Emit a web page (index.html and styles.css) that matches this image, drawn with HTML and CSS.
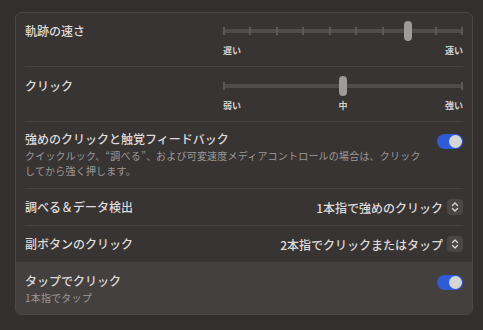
FILE: index.html
```html
<!DOCTYPE html>
<html lang="ja">
<head>
    <meta charset="utf-8">
    <title>トラックパッド</title>
    <link rel="stylesheet" href="styles.css">
</head>
<body>
    <div class="panel">
        <div class="row slider-row">
            <div class="title">軌跡の速さ</div>
            <div class="slider">
                <div class="track">
                    <span class="tick"></span><span class="tick"></span><span class="tick"></span><span class="tick"></span><span class="tick"></span>
                    <span class="tick"></span><span class="tick"></span><span class="tick"></span><span class="tick"></span><span class="tick"></span>
                    <span class="knob" style="left: 77.1%"></span>
                </div>
                <div class="marks">
                    <span>遅い</span>
                    <span>速い</span>
                </div>
            </div>
        </div>

        <div class="row slider-row second">
            <div class="title">クリック</div>
            <div class="slider">
                <div class="track">
                    <span class="tick"></span><span class="tick"></span>
                    <span class="knob" style="left: 50%"></span>
                </div>
                <div class="marks">
                    <span>弱い</span>
                    <span>中</span>
                    <span>強い</span>
                </div>
            </div>
        </div>

        <div class="row toggle-row force">
            <div>
                <div class="title">強めのクリックと触覚フィードバック</div>
                <p class="desc">クイックルック、“調べる”、および可変速度メディアコントロールの場合は、クリック<br>してから強く押します。</p>
            </div>
            <span class="toggle on"></span>
        </div>

        <div class="row popup-row">
            <div class="title">調べる＆データ検出</div>
            <div class="popup">
                <span>1本指で強めのクリック</span>
                <span class="stepper">
                    <svg width="16" height="16" viewBox="0 0 16 16"><path d="M5.5 6.5 8 4l2.5 2.5M5.5 9.5 8 12l2.5-2.5" fill="none" stroke="#d9d6d5" stroke-width="1.4" stroke-linecap="round" stroke-linejoin="round"/></svg>
                </span>
            </div>
        </div>

        <div class="row popup-row last">
            <div class="title">副ボタンのクリック</div>
            <div class="popup">
                <span>2本指でクリックまたはタップ</span>
                <span class="stepper">
                    <svg width="16" height="16" viewBox="0 0 16 16"><path d="M5.5 6.5 8 4l2.5 2.5M5.5 9.5 8 12l2.5-2.5" fill="none" stroke="#d9d6d5" stroke-width="1.4" stroke-linecap="round" stroke-linejoin="round"/></svg>
                </span>
            </div>
        </div>

        <div class="row toggle-row tap">
            <div>
                <div class="title">タップでクリック</div>
                <p class="desc">1本指でタップ</p>
            </div>
            <span class="toggle on"></span>
        </div>
    </div>
</body>
</html>
```

FILE: styles.css
```css
body {
    margin: 0;
    background-color: #332f2e;
    font-family: "Noto Sans CJK JP", "Noto Sans", sans-serif;
    color: #dfdbda;
}
.panel {
    margin: 12px 10px 0 15px;
    border: 1px solid #4b4746;
    border-radius: 6px;
    background-color: #383433;
    overflow: hidden;
}
.row {
    margin: 0 9px;
    border-bottom: 1px solid #474342;
    display: flex;
    justify-content: space-between;
}
.row.last {
    border-bottom: none;
}
.title {
    font-size: 12px;
    font-weight: 500;
    line-height: 16px;
}
.desc {
    margin: 1px 0 0;
    font-size: 10px;
    line-height: 15px;
    letter-spacing: 0.2px;
    color: #9c9897;
}

/* sliders */
.slider-row {
    padding-top: 8px;
    box-sizing: border-box;
    height: 54px;
}
.slider-row.second {
    padding-top: 9px;
    height: 55px;
}
.slider-row .title {
    margin-top: 2px;
}
.slider {
    width: 240px;
}
.track {
    position: relative;
    height: 20px;
    display: flex;
    justify-content: space-between;
    align-items: center;
}
.track::before {
    content: "";
    position: absolute;
    left: 0;
    right: 0;
    top: 8px;
    height: 4px;
    background-color: #504c4b;
}
.tick {
    position: relative;
    width: 2px;
    height: 8px;
    background-color: #5d5958;
}
.knob {
    position: absolute;
    top: 0;
    width: 8px;
    height: 20px;
    margin-left: -4px;
    border-radius: 4px;
    background-color: #9e9c9b;
}
.marks {
    display: flex;
    justify-content: space-between;
    margin-top: 4px;
    font-size: 9px;
    font-weight: 700;
    line-height: 12px;
    color: #d4d0cf;
}

/* toggles */
.toggle-row {
    align-items: flex-start;
}
.force {
    padding: 9px 0 10px;
}
.tap {
    margin: 0;
    padding: 11px 9px 0;
    height: 52px;
    box-sizing: border-box;
    border-bottom: none;
    background-color: #444040;
}
.toggle {
    position: relative;
    width: 26px;
    height: 15px;
    border-radius: 8px;
    background-color: #2f5bd6;
    margin-top: 3px;
}
.toggle::after {
    content: "";
    position: absolute;
    top: 1px;
    right: 1px;
    width: 13px;
    height: 13px;
    border-radius: 50%;
    background-color: #d7d6d6;
}
.tap .toggle {
    margin-top: 2px;
}

/* popups */
.popup-row {
    height: 36px;
    align-items: center;
}
.popup {
    display: flex;
    align-items: center;
    gap: 4px;
    font-size: 12px;
    font-weight: 500;
}
.stepper {
    display: flex;
    width: 16px;
    height: 16px;
    border-radius: 4px;
    background-color: #4b4746;
}
```
